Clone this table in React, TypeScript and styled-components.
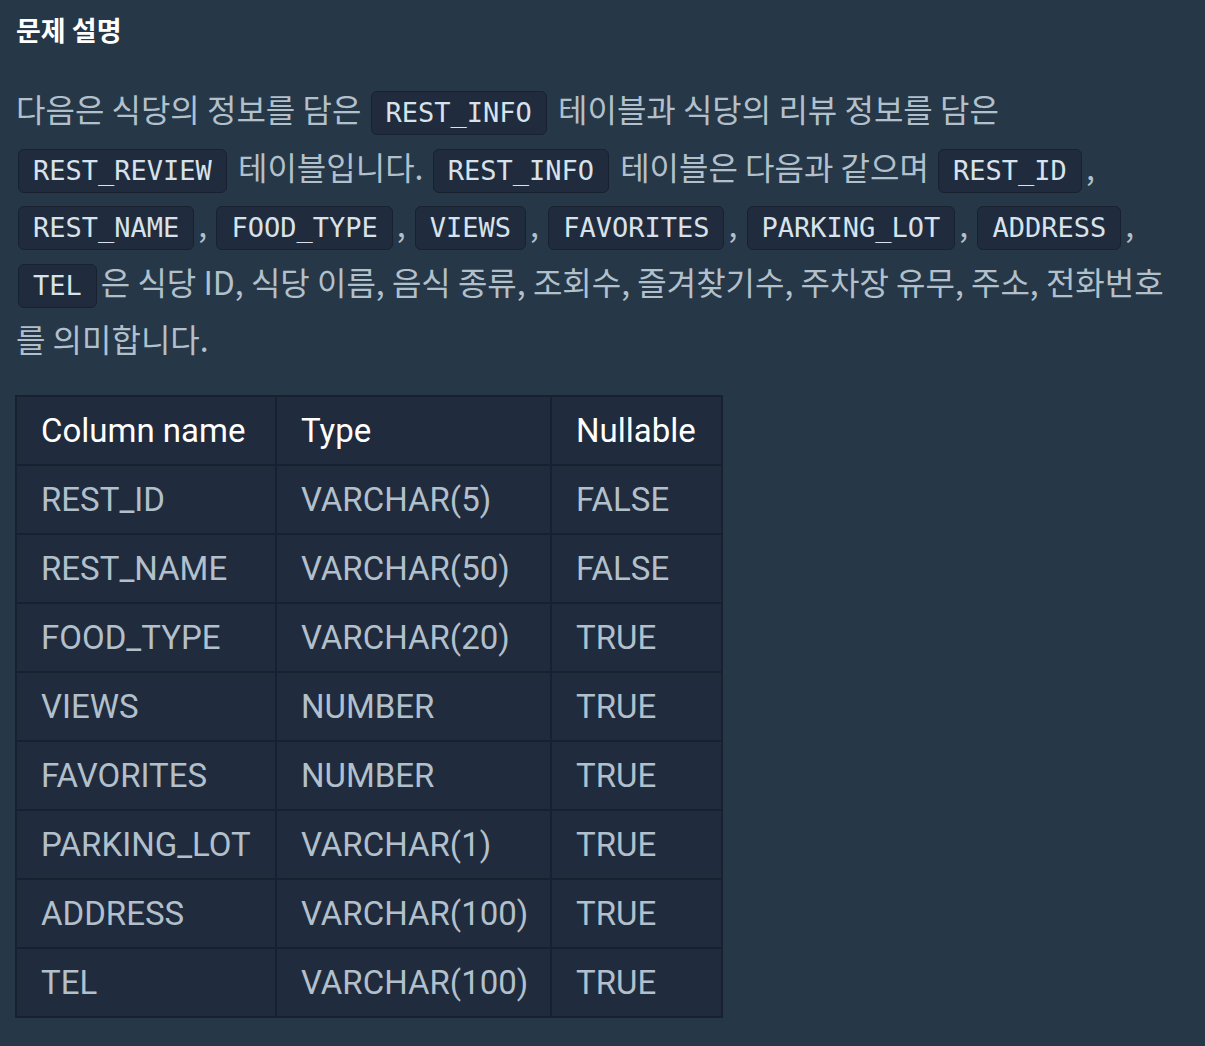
import React from 'react';
import styled, { createGlobalStyle } from 'styled-components';

interface ColumnRow {
  name: string;
  type: string;
  nullable: string;
}

const rows: ColumnRow[] = [
  { name: 'REST_ID', type: 'VARCHAR(5)', nullable: 'FALSE' },
  { name: 'REST_NAME', type: 'VARCHAR(50)', nullable: 'FALSE' },
  { name: 'FOOD_TYPE', type: 'VARCHAR(20)', nullable: 'TRUE' },
  { name: 'VIEWS', type: 'NUMBER', nullable: 'TRUE' },
  { name: 'FAVORITES', type: 'NUMBER', nullable: 'TRUE' },
  { name: 'PARKING_LOT', type: 'VARCHAR(1)', nullable: 'TRUE' },
  { name: 'ADDRESS', type: 'VARCHAR(100)', nullable: 'TRUE' },
  { name: 'TEL', type: 'VARCHAR(100)', nullable: 'TRUE' },
];

const App = () => (
  <>
    <GlobalStyle />
    <Wrap>
      <Title>문제 설명</Title>
      <Paragraph>
        다음은 식당의 정보를 담은 <Code>REST_INFO</Code> 테이블과 식당의 리뷰 정보를 담은{' '}
        <Code>REST_REVIEW</Code> 테이블입니다. <Code>REST_INFO</Code> 테이블은 다음과 같으며{' '}
        <Code>REST_ID</Code>, <Code>REST_NAME</Code>, <Code>FOOD_TYPE</Code>, <Code>VIEWS</Code>,{' '}
        <Code>FAVORITES</Code>, <Code>PARKING_LOT</Code>, <Code>ADDRESS</Code>, <Code>TEL</Code>은 식당
        ID, 식당 이름, 음식 종류, 조회수, 즐겨찾기수, 주차장 유무, 주소, 전화번호를 의미합니다.
      </Paragraph>

      <Table>
        <colgroup>
          <Col width={260} />
          <Col width={275} />
          <Col width={171} />
        </colgroup>
        <thead>
          <Row>
            <HeadCell>Column name</HeadCell>
            <HeadCell>Type</HeadCell>
            <HeadCell>Nullable</HeadCell>
          </Row>
        </thead>
        <tbody>
          {rows.map((r) => (
            <Row key={r.name}>
              <Cell>{r.name}</Cell>
              <Cell>{r.type}</Cell>
              <Cell>{r.nullable}</Cell>
            </Row>
          ))}
        </tbody>
      </Table>
    </Wrap>
  </>
);

export default App;

const GlobalStyle = createGlobalStyle`
  html, body {
    margin: 0;
    background: #263747;
  }
`;

const Wrap = styled.div`
  padding: 8px 16px 24px 16px;
  font-family: "Noto Sans CJK KR", "Noto Sans", sans-serif;
  color: #b2c0cc;
`;

const Title = styled.h5`
  margin: 0;
  font-size: 27px;
  line-height: 44px;
  font-weight: 700;
  color: #ffffff;
`;

const Paragraph = styled.p`
  margin: 28px 0 27px 0;
  font-size: 32px;
  line-height: 57.5px;
`;

const Code = styled.code`
  display: inline-block;
  margin: 0 4px 0 2px;
  padding: 5px 14px;
  border: 1px solid #172130;
  border-radius: 6px;
  background: #202b3d;
  color: #d7e2eb;
  font-family: "DejaVu Sans Mono", "Liberation Mono", monospace;
  font-size: 27px;
  line-height: 32px;
`;

// Table
const Table = styled.table`
  width: 706px;
  margin-left: -1px;
  table-layout: fixed;
  border-collapse: collapse;
  border: 2px solid #172130;
  background: #202b3d;
  font-family: Roboto, "Noto Sans", sans-serif;
  font-size: 33px;
`;

const Col = styled.col<{ width: number }>`
  width: ${(p) => p.width}px;
`;

const Row = styled.tr`
  height: 69px;
`;

const HeadCell = styled.th`
  padding: 0 24px;
  border: 2px solid #172130;
  text-align: left;
  font-weight: 400;
  color: #ffffff;
  white-space: nowrap;
`;

const Cell = styled.td`
  padding: 0 24px;
  border: 2px solid #172130;
  color: #b2c0cc;
  white-space: nowrap;
`;
